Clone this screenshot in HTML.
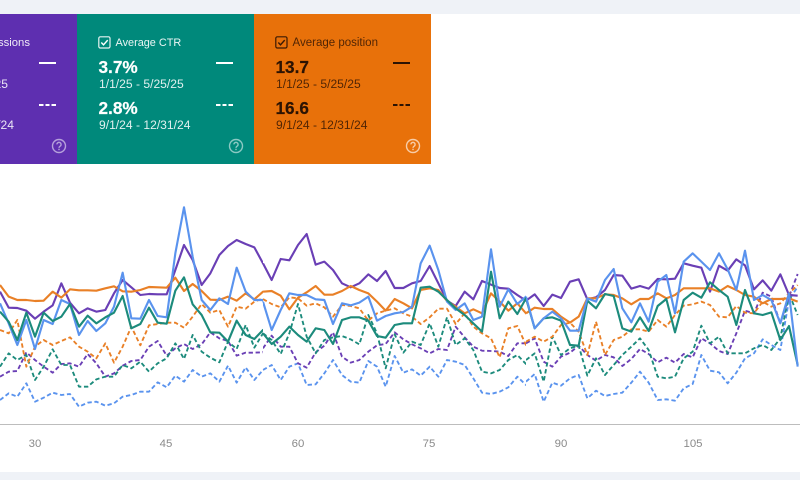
<!DOCTYPE html>
<html lang="en">
<head>
<meta charset="utf-8">
<title>Performance chart</title>
<style>
html,body{margin:0;padding:0;background:#fff}
body{width:800px;height:480px;position:relative;overflow:hidden;font-family:"Liberation Sans",sans-serif}
.band{position:absolute;left:0;width:800px;background:#eff2f7}
.card{position:absolute;top:14px;height:150px;overflow:hidden;filter:blur(.3px)}
.t{position:absolute;white-space:nowrap}
.lab{font-size:10.9px;line-height:14px;top:21.5px}
.val{font-size:17.2px;font-weight:bold;line-height:20px;-webkit-text-stroke:.2px currentColor}
.dt{font-size:12.1px;line-height:14px;opacity:.88}
.ln{position:absolute;width:17px;height:2px}
.w{color:#fff}.k{color:#3b1a04}
.lines{position:absolute;top:200px;height:280px;overflow:hidden;filter:blur(.35px)}
.lines polyline{fill:none;stroke-width:6.4;stroke-linejoin:round;stroke-linecap:butt}
.d polyline{stroke-dasharray:13 8;stroke-width:5.6}
.b{stroke:#5a93ee}.p{stroke:#6a3fb5}.g{stroke:#1c8b7c}.o{stroke:#e98027}
.tick{position:absolute;top:437px;width:40px;text-align:center;font-size:11.4px;line-height:14px;color:#8a8a8a;filter:blur(.25px)}
</style>
</head>
<body>
<div class="band" style="top:0;height:14px"></div>
<div class="band" style="top:472px;height:8px"></div>

<div class="card w" style="left:0;width:77px;background:#5e2fb0">
  <div class="t lab" style="right:47px;font-size:11.3px;opacity:.9">Total impressions</div>
  <div class="t dt" style="right:69px;top:63px">1/1/25 - 5/25/25</div>
  <div class="t dt" style="right:63px;top:104px">9/1/24 - 12/31/24</div>
  <div class="ln" style="left:39px;top:48px;background:#fff"></div>
  <div class="t" style="left:39px;top:89.5px;width:17px;height:2px;background:repeating-linear-gradient(90deg,#fff 0 4.4px,transparent 4.4px 6.3px)"></div>
  <svg class="t" style="left:51px;top:124px;opacity:.55" width="16" height="16" viewBox="0 0 16 16"><circle cx="8" cy="8" r="6.5" fill="none" stroke="#fff" stroke-width="1.4"/><path d="M5.9 6.4a2.1 2.1 0 1 1 3.2 1.8c-.8.5-1.1.9-1.1 1.7M8 10.8v1.3" fill="none" stroke="#fff" stroke-width="1.4"/></svg>
</div>

<div class="card w" style="left:77px;width:177px;background:#00897b">
  <svg class="t" style="left:21px;top:22px" width="13" height="13" viewBox="0 0 13 13"><rect x=".8" y=".8" width="11.2" height="11.2" rx="1.5" fill="none" stroke="#fff" stroke-width="1.2" opacity=".9"/><path d="M3.3 6.5l2.2 2.3 4.2-4.7" fill="none" stroke="#fff" stroke-width="1.4"/></svg>
  <div class="t lab" style="left:38.5px;opacity:.92">Average CTR</div>
  <div class="t val" style="left:21.5px;top:42.5px">3.7%</div>
  <div class="t dt" style="left:22px;top:63px">1/1/25 - 5/25/25</div>
  <div class="t val" style="left:21.5px;top:83.5px">2.8%</div>
  <div class="t dt" style="left:22px;top:104px">9/1/24 - 12/31/24</div>
  <div class="ln" style="left:139px;top:48px;background:#fff"></div>
  <div class="t" style="left:139px;top:89.5px;width:17px;height:2px;background:repeating-linear-gradient(90deg,#fff 0 4.4px,transparent 4.4px 6.3px)"></div>
  <svg class="t" style="left:151px;top:124px;opacity:.55" width="16" height="16" viewBox="0 0 16 16"><circle cx="8" cy="8" r="6.5" fill="none" stroke="#fff" stroke-width="1.4"/><path d="M5.9 6.4a2.1 2.1 0 1 1 3.2 1.8c-.8.5-1.1.9-1.1 1.7M8 10.8v1.3" fill="none" stroke="#fff" stroke-width="1.4"/></svg>
</div>

<div class="card k" style="left:254px;width:177px;background:#e8710a">
  <svg class="t" style="left:21px;top:22px" width="13" height="13" viewBox="0 0 13 13"><rect x=".8" y=".8" width="11.2" height="11.2" rx="1.5" fill="none" stroke="#3b1a04" stroke-width="1.2"/><path d="M3.3 6.5l2.2 2.3 4.2-4.7" fill="none" stroke="#3b1a04" stroke-width="1.4"/></svg>
  <div class="t lab" style="left:38.5px;font-size:11.5px;opacity:.88">Average position</div>
  <div class="t val" style="left:21.5px;top:42.5px;color:#2c1303">13.7</div>
  <div class="t dt" style="left:22px;top:63px">1/1/25 - 5/25/25</div>
  <div class="t val" style="left:21.5px;top:83.5px;color:#2c1303">16.6</div>
  <div class="t dt" style="left:22px;top:104px">9/1/24 - 12/31/24</div>
  <div class="ln" style="left:139px;top:48px;background:#2c1303"></div>
  <div class="t" style="left:139px;top:89.5px;width:17px;height:2px;background:repeating-linear-gradient(90deg,#2c1303 0 4.4px,transparent 4.4px 6.3px)"></div>
  <svg class="t" style="left:151px;top:124px;opacity:.65" width="16" height="16" viewBox="0 0 16 16"><circle cx="8" cy="8" r="6.5" fill="none" stroke="#fff" stroke-width="1.4"/><path d="M5.9 6.4a2.1 2.1 0 1 1 3.2 1.8c-.8.5-1.1.9-1.1 1.7M8 10.8v1.3" fill="none" stroke="#fff" stroke-width="1.4"/></svg>
</div>

<svg class="lines" style="left:0;width:263px" viewBox="0 0 789 840" preserveAspectRatio="none">
<g class="d">
<polyline class="b" points="0,600 26,580 52,590 79,550 105,605 131,593 158,578 184,585 210,582 237,620 263,608 289,605 316,617 342,610 368,590 394,585 421,575 447,575 473,547 500,562 526,527 552,545 578,510 605,530 631,520 658,545 684,497 710,548 737,502 763,540 789,510 815,495"/>
<polyline class="p" points="0,530 26,515 52,513 79,457 105,480 131,500 158,518 184,492 210,490 237,500 263,462 289,490 316,530 342,520 368,497 394,483 421,480 447,440 473,423 500,467 526,445 552,432 578,447 605,433 631,397 658,415 684,423 710,467 737,458 763,458 789,457 815,420"/>
<polyline class="g" points="0,500 26,460 52,480 79,465 105,540 131,500 158,448 184,495 210,495 237,560 263,560 289,538 316,530 342,530 368,495 394,505 421,485 447,515 473,490 500,475 526,430 552,477 578,405 605,455 631,473 658,487 684,425 710,447 737,375 763,443 789,400 815,380"/>
<polyline class="o" points="0,390 26,400 52,360 79,500 105,440 131,420 158,435 184,423 210,412 237,440 263,455 289,475 316,430 342,488 368,440 394,380 421,436 447,376 473,372 500,368 526,368 552,383 578,350 605,312 631,338 658,330 684,380 710,320 737,326 763,305 789,295 815,310"/>
</g>
<polyline class="p" points="0,275 26,323 52,324 79,332 105,356 131,335 158,316 184,250 210,308 237,340 263,325 289,335 316,330 342,280 368,240 394,262 421,285 447,282 473,283 500,283 526,210 552,135 578,180 605,255 631,220 658,165 684,138 710,120 737,132 763,142 789,190 815,235"/>
<polyline class="o" points="0,255 26,290 52,300 79,300 105,303 131,302 158,275 184,293 210,268 237,271 263,271 289,272 316,265 342,259 368,274 394,275 421,270 447,261 473,262 500,263 526,233 552,273 578,252 605,273 631,299 658,300 684,290 710,302 737,280 763,298 789,275 815,273"/>
<polyline class="b" points="0,310 26,370 52,435 79,360 105,447 131,360 158,372 184,300 210,312 237,405 263,363 289,393 316,370 342,320 368,218 394,355 421,356 447,300 473,348 500,352 526,160 552,22 578,170 605,300 631,330 658,295 684,312 710,203 737,275 763,300 789,300 815,385"/>
<polyline class="g" points="0,335 26,365 52,420 79,338 105,410 131,338 158,363 184,350 210,312 237,380 263,347 289,370 316,352 342,338 368,288 394,385 421,372 447,323 473,368 500,371 526,272 552,232 578,313 605,345 631,397 658,398 684,425 710,362 737,405 763,417 789,390 815,425"/>
</svg>

<svg class="lines" style="left:263px;width:263px" viewBox="-6 0 789 840" preserveAspectRatio="none">
<g class="d">
<polyline class="b" points="-6,510 20,495 47,540 73,500 99,490 125,555 152,553 178,520 204,480 231,525 257,545 283,548 310,483 336,500 362,560 389,468 415,518 441,508 467,527 494,500 520,530 546,480 572,485 599,495 625,535 651,578 678,582 704,575 730,562 757,530 783,555 809,525"/>
<polyline class="p" points="-6,445 20,407 47,440 73,440 99,490 125,503 152,457 178,437 204,397 231,470 257,488 283,480 310,455 336,436 362,432 389,397 415,418 441,433 467,445 494,460 520,447 546,450 572,380 599,412 625,440 651,452 678,453 704,455 730,468 757,430 783,430 809,413"/>
<polyline class="g" points="-6,400 20,420 47,462 73,400 99,312 125,410 152,460 178,420 204,412 231,408 257,418 283,433 310,345 336,400 362,505 389,403 415,458 441,425 467,435 494,370 520,440 546,352 572,435 599,415 625,450 651,515 678,520 704,510 730,480 757,465 783,492 809,460"/>
<polyline class="o" points="-6,297 20,312 47,322 73,292 99,295 125,317 152,310 178,322 204,350 231,315 257,318 283,325 310,362 336,340 362,332 389,325 415,340 441,350 467,372 494,352 520,326 546,326 572,372 599,340 625,380 651,400 678,415 704,472 730,385 757,378 783,435 809,415"/>
</g>
<polyline class="p" points="-6,190 20,240 47,177 73,181 99,135 125,102 152,194 178,185 204,210 231,250 257,262 283,250 310,223 336,243 362,213 389,264 415,264 441,250 467,243 494,198 520,250 546,302 572,318 599,275 625,298 651,243 678,254 704,264 730,266 757,285 783,302 809,283"/>
<polyline class="o" points="-6,275 20,273 47,287 73,328 99,293 125,277 152,258 178,284 204,284 231,273 257,258 283,270 310,280 336,305 362,332 389,297 415,310 441,325 467,270 494,265 520,270 546,303 572,320 599,340 625,328 651,340 678,280 704,305 730,332 757,310 783,340 809,320"/>
<polyline class="b" points="-6,305 20,390 47,330 73,280 99,285 125,285 152,298 178,300 204,372 231,310 257,316 283,308 310,290 336,362 362,348 389,340 415,336 441,320 467,190 494,137 520,210 546,305 572,330 599,310 625,360 651,350 678,148 704,320 730,268 757,312 783,290 809,385"/>
<polyline class="g" points="-6,400 20,432 47,410 73,380 99,405 125,425 152,385 178,390 204,432 231,360 257,352 283,352 310,362 336,408 362,413 389,375 415,370 441,370 467,263 494,260 520,275 546,300 572,325 599,345 625,370 651,395 678,215 704,355 730,305 757,342 783,295 809,385"/>
</svg>

<svg class="lines" style="left:526px;width:274px" viewBox="-12 0 822 840" preserveAspectRatio="none">
<g class="d">
<polyline class="b" points="-12,545 14,522 41,605 67,548 93,557 120,535 146,525 172,595 198,572 225,588 251,582 277,578 304,548 330,515 356,548 383,600 409,598 435,602 461,565 488,552 514,465 540,512 567,517 593,550 619,518 645,475 672,460 698,418 724,435 751,450 777,300 803,260"/>
<polyline class="p" points="-12,430 14,415 41,485 67,500 93,470 120,458 146,437 172,465 198,482 225,465 251,472 277,498 304,477 330,447 356,462 383,487 409,473 435,488 461,462 488,472 514,415 540,430 567,453 593,462 619,400 645,332 672,340 698,278 724,290 751,370 777,290 803,222"/>
<polyline class="g" points="-12,480 14,460 41,545 67,410 93,465 120,445 146,437 172,527 198,475 225,525 251,495 277,465 304,440 330,415 356,450 383,530 409,535 435,530 461,475 488,455 514,377 540,430 567,410 593,460 619,460 645,460 672,445 698,435 724,450 751,415 777,280 803,345"/>
<polyline class="o" points="-12,425 14,410 41,425 67,410 93,375 120,368 146,395 172,465 198,365 225,465 251,420 277,410 304,388 330,388 356,395 383,360 409,380 435,345 461,317 488,313 514,305 540,315 567,350 593,352 619,318 645,338 672,340 698,305 724,320 751,310 777,280 803,255"/>
</g>
<polyline class="p" points="-12,302 14,283 41,318 67,284 93,294 120,245 146,238 172,298 198,292 225,270 251,225 277,227 304,266 330,258 356,266 383,237 409,238 435,236 461,190 488,197 514,203 540,275 567,197 593,212 619,178 645,196 672,268 698,241 724,272 751,223 777,285 803,287"/>
<polyline class="o" points="-12,340 14,323 41,327 67,327 93,350 120,368 146,350 172,295 198,295 225,283 251,285 277,295 304,313 330,297 356,297 383,280 409,295 435,285 461,265 488,265 514,265 540,265 567,275 593,258 619,270 645,285 672,290 698,310 724,297 751,297 777,295 803,305"/>
<polyline class="g" points="-12,295 14,385 41,355 67,352 93,362 120,435 146,437 172,302 198,325 225,282 251,288 277,385 304,395 330,352 356,393 383,318 409,297 435,397 461,300 488,278 514,293 540,247 567,270 593,290 619,375 645,270 672,340 698,345 724,337 751,420 777,378 803,495"/>
<polyline class="b" points="-12,290 14,385 41,355 67,335 93,355 120,392 146,392 172,295 198,305 225,240 251,207 277,325 304,367 330,310 356,365 383,245 409,225 435,340 461,185 488,160 514,185 540,210 567,160 593,208 619,270 645,152 672,300 698,285 724,300 751,370 777,280 803,500"/>
</svg>

<div style="position:absolute;left:0;top:424px;width:800px;height:1px;background:#bdbdbd"></div>
<div class="tick" style="left:15px">30</div>
<div class="tick" style="left:146px">45</div>
<div class="tick" style="left:278px">60</div>
<div class="tick" style="left:409px">75</div>
<div class="tick" style="left:541px">90</div>
<div class="tick" style="left:673px">105</div>
</body>
</html>
